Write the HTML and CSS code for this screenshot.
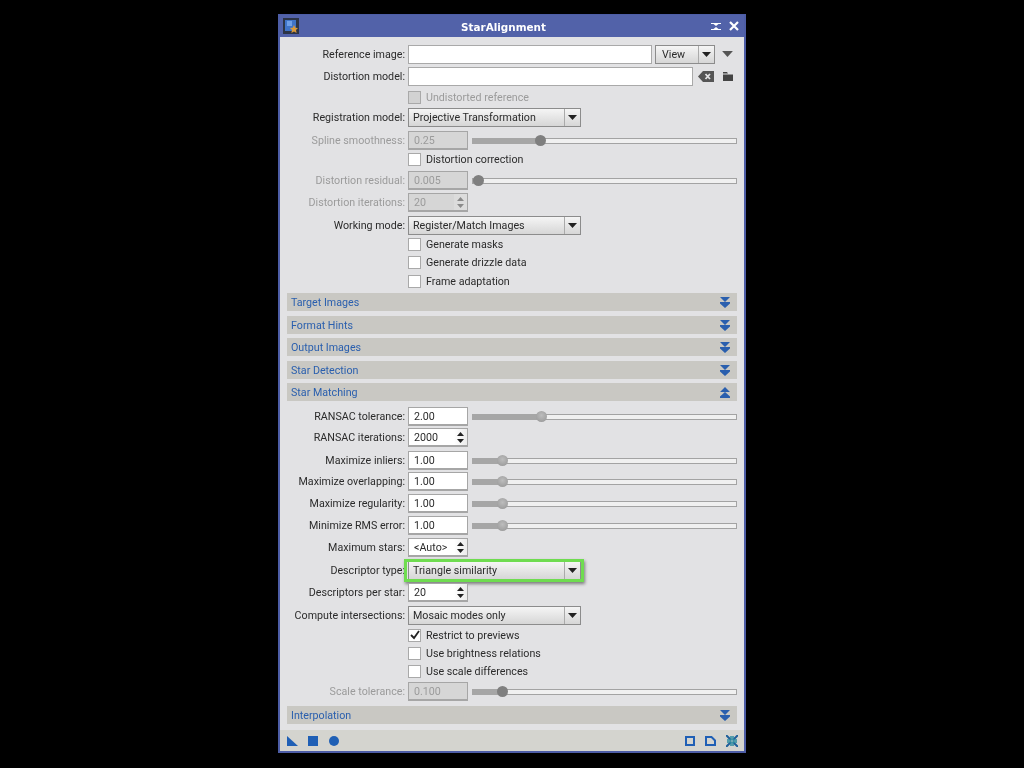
FILE: index.html
```html
<!DOCTYPE html>
<html lang="en">
<head>
    <meta charset="UTF-8">
    <title>StarAlignment</title>
    <link rel="stylesheet" href="styles.css">
</head>
<body>
    <svg class="defs" width="0" height="0">
        <symbol id="down" viewBox="0 0 10 11"><path d="M0 0h10L5 5zM0 5h10v1.500L5 11 0 6.500z"/></symbol>
        <symbol id="up" viewBox="0 0 10 11"><path d="M5 0l5 5H0zM5 5l5 4.500V11H0V9.500z"/></symbol>
        <symbol id="tri" viewBox="0 0 9 5"><path d="M0 0h9L4.500 5z"/></symbol>
    </svg>

    <div class="window">
        <div class="titlebar">
            <svg class="app-icon" width="16" height="16" viewBox="0 0 16 16">
                <rect width="16" height="16" fill="#2c3446"/>
                <rect x="2" y="2" width="11" height="11" fill="#3f74c8"/>
                <rect x="4" y="3" width="5" height="5" fill="#6f9fe6"/>
                <path d="M11 7l1.300 2.800 2.700.3-2 2 .6 2.900-2.600-1.500L8.400 15l.6-2.900-2-2 2.700-.3z" fill="#d99a3c"/>
            </svg>
            <span class="title">StarAlignment</span>
            <svg class="shade" width="10" height="7" viewBox="0 0 10 7"><path d="M0 0h10v1H7.500L5 3 2.500 1H0zM5 4l2.500 2H10v1H0V6h2.500z" fill="#fff"/></svg>
            <svg class="close" width="10" height="10" viewBox="0 0 10 10"><path d="M1 1l8 8M9 1L1 9" stroke="#fff" stroke-width="2.200"/></svg>
        </div>

        <div class="body">
            <div class="row">
                <label>Reference image:</label>
                <div class="field ref"></div>
                <div class="combo view"><span>View</span><i><svg class="arrow"><use href="#tri"/></svg></i></div>
                <svg class="menu-tri" width="11" height="6"><use href="#tri"/></svg>
            </div>
            <div class="row mt3">
                <label>Distortion model:</label>
                <div class="field dist"></div>
                <svg class="clear" width="16" height="11" viewBox="0 0 16 11"><path d="M5 0h11v11H5L0 5.500z" fill="#555"/><path d="M7.500 3l4.500 5M12 3L7.500 8" stroke="#e2e2e4" stroke-width="1.800"/></svg>
                <svg class="folder" width="10" height="9" viewBox="0 0 10 9"><path d="M0 0h4l1 1.500H0zM0 2.500h10V9H0z" fill="#444"/></svg>
            </div>
            <div class="check-row off mt2"><b class="box"></b>Undistorted reference</div>
            <div class="row mt2">
                <label>Registration model:</label>
                <div class="combo"><span>Projective Transformation</span><i><svg class="arrow"><use href="#tri"/></svg></i></div>
            </div>
            <div class="row off mt4">
                <label>Spline smoothness:</label>
                <div class="num">0.25</div>
                <div class="slider"><div class="fill" style="width: 68px"></div><b class="knob"></b><div class="rest"></div></div>
            </div>
            <div class="check-row"><b class="box"></b>Distortion correction</div>
            <div class="row off mt3">
                <label>Distortion residual:</label>
                <div class="num">0.005</div>
                <div class="slider"><div class="fill" style="width: 6px"></div><b class="knob"></b><div class="rest"></div></div>
            </div>
            <div class="row off mt3">
                <label>Distortion iterations:</label>
                <div class="num spin">20<em><svg><use href="#tri"/></svg><svg><use href="#tri"/></svg></em></div>
            </div>
            <div class="row mt4">
                <label>Working mode:</label>
                <div class="combo"><span>Register/Match Images</span><i><svg class="arrow"><use href="#tri"/></svg></i></div>
            </div>
            <div class="check-row"><b class="box"></b>Generate masks</div>
            <div class="check-row"><b class="box"></b>Generate drizzle data</div>
            <div class="check-row mt1"><b class="box"></b>Frame adaptation</div>

            <div class="section mt3">Target Images<svg><use href="#down"/></svg></div>
            <div class="section mt5">Format Hints<svg><use href="#down"/></svg></div>
            <div class="section mt4">Output Images<svg><use href="#down"/></svg></div>
            <div class="section mt5">Star Detection<svg><use href="#down"/></svg></div>
            <div class="section mt4">Star Matching<svg><use href="#up"/></svg></div>

            <div class="row mt6">
                <label>RANSAC tolerance:</label>
                <div class="num">2.00</div>
                <div class="slider"><div class="fill" style="width: 69px"></div><b class="knob"></b><div class="rest"></div></div>
            </div>
            <div class="row mt2">
                <label>RANSAC iterations:</label>
                <div class="num spin">2000<em><svg><use href="#tri"/></svg><svg><use href="#tri"/></svg></em></div>
            </div>
            <div class="row mt4">
                <label>Maximize inliers:</label>
                <div class="num">1.00</div>
                <div class="slider"><div class="fill" style="width: 30px"></div><b class="knob"></b><div class="rest"></div></div>
            </div>
            <div class="row mt2">
                <label>Maximize overlapping:</label>
                <div class="num">1.00</div>
                <div class="slider"><div class="fill" style="width: 30px"></div><b class="knob"></b><div class="rest"></div></div>
            </div>
            <div class="row mt3">
                <label>Maximize regularity:</label>
                <div class="num">1.00</div>
                <div class="slider"><div class="fill" style="width: 30px"></div><b class="knob"></b><div class="rest"></div></div>
            </div>
            <div class="row mt3">
                <label>Minimize RMS error:</label>
                <div class="num">1.00</div>
                <div class="slider"><div class="fill" style="width: 30px"></div><b class="knob"></b><div class="rest"></div></div>
            </div>
            <div class="row mt3">
                <label>Maximum stars:</label>
                <div class="num spin">&lt;Auto&gt;<em><svg><use href="#tri"/></svg><svg><use href="#tri"/></svg></em></div>
            </div>
            <div class="row mt4">
                <label>Descriptor type:</label>
                <div class="combo marked"><span>Triangle similarity</span><i><svg class="arrow"><use href="#tri"/></svg></i></div>
            </div>
            <div class="row mt3">
                <label>Descriptors per star:</label>
                <div class="num spin">20<em><svg><use href="#tri"/></svg><svg><use href="#tri"/></svg></em></div>
            </div>
            <div class="row mt4">
                <label>Compute intersections:</label>
                <div class="combo"><span>Mosaic modes only</span><i><svg class="arrow"><use href="#tri"/></svg></i></div>
            </div>
            <div class="check-row mt1">
                <b class="box"><svg width="10" height="10" viewBox="0 0 10 10"><path d="M1 5l3 3 5-7" fill="none" stroke="#222" stroke-width="1.800"/></svg></b>Restrict to previews
            </div>
            <div class="check-row"><b class="box"></b>Use brightness relations</div>
            <div class="check-row"><b class="box"></b>Use scale differences</div>
            <div class="row off mt2">
                <label>Scale tolerance:</label>
                <div class="num">0.100</div>
                <div class="slider"><div class="fill" style="width: 30px"></div><b class="knob"></b><div class="rest"></div></div>
            </div>
            <div class="section mt5">Interpolation<svg><use href="#down"/></svg></div>
        </div>

        <div class="footer">
            <svg width="11" height="10" viewBox="0 0 11 10"><path d="M0 0l11 10H0z" fill="#1f5fb5"/></svg>
            <svg class="square" width="10" height="10" viewBox="0 0 10 10"><rect width="10" height="10" fill="#1f5fb5"/></svg>
            <svg class="circle" width="10" height="10" viewBox="0 0 10 10"><circle cx="5" cy="5" r="5" fill="#1f5fb5"/></svg>
            <svg class="push" width="10" height="10" viewBox="0 0 10 10"><rect x="1" y="1" width="8" height="8" fill="none" stroke="#1f5fb5" stroke-width="2"/></svg>
            <svg class="doc" width="11" height="10" viewBox="0 0 11 10"><path d="M1 1h5.500L10 4.500V9H1z" fill="none" stroke="#1f5fb5" stroke-width="2"/></svg>
            <svg class="expand" width="12" height="12" viewBox="0 0 12 12"><path d="M0 0l5 5M12 0L7 5M0 12l5-5M12 12L7 7" stroke="#1f5f9a" stroke-width="2"/><path d="M5 1v4H1M7 1v4h4M5 11V7H1M7 11V7h4" fill="none" stroke="#2a8aa0" stroke-width="1.500"/></svg>
        </div>
    </div>
</body>
</html>
```

FILE: styles.css
```css
html, body { margin: 0; height: 100%; background: #000; }
body { font-family: Roboto, Arial, sans-serif; font-size: 10.7px; color: #2b2b2b; }
.defs { position: absolute; }

.window {
    width: 468px; height: 739px; margin: 14px 0 0 278px; box-sizing: border-box;
    display: flex; flex-direction: column;
    background: #e2e2e4; border: 2px solid #4d5da6; border-top-width: 1px;
    filter: blur(.3px);
}

.titlebar { height: 22px; flex: none; display: flex; align-items: center; background: #5262a9; padding: 0 5px 0 3px; }
.app-icon { flex: none; }
.title { flex: 1; text-align: center; color: #fff; font-family: "DejaVu Sans", sans-serif; font-weight: bold; font-size: 10.4px; padding-top: 1px; padding-right: 3px; }
.shade { margin-right: 8px; }

.body { flex: 1; padding: 8px 7px 0; }
.row { display: flex; align-items: center; height: 19px; }
.row label { width: 118px; margin-right: 3px; text-align: right; white-space: nowrap; flex: none; }
.off, .off label { color: #9b9b9b; }

.mt1 { margin-top: 1px; }
.mt2 { margin-top: 2px; }
.mt3 { margin-top: 3px; }
.mt4 { margin-top: 4px; }
.mt5 { margin-top: 5px; }
.mt6 { margin-top: 6px; }

.field { height: 19px; box-sizing: border-box; background: #fff; border: 1px solid #a9a9a9; }
.ref { width: 244px; }
.dist { width: 285px; }
.clear { margin-left: 5px; }
.folder { margin-left: 9px; }
.menu-tri { margin-left: 7px; margin-top: -1px; fill: #555; }

.combo {
    width: 173px; height: 19px; box-sizing: border-box; display: flex; position: relative;
    border: 1px solid #8c8c8c; background: linear-gradient(#f5f5f5, #d6d6d6);
}
.combo span { flex: 1; padding-left: 4px; line-height: 18px; }
.combo i { width: 15px; display: flex; align-items: center; justify-content: center; border-left: 1px solid #aaa; }
.arrow { width: 9px; height: 5px; fill: #222; }
.view { width: 60px; margin-left: 3px; }
.view span { padding-left: 6px; }

/* green frame drawn over the descriptor combo */
.marked::after {
    content: ""; position: absolute; top: -3px; bottom: -3px; left: -5px; right: -4px;
    border: 3px solid #6fdc50; box-shadow: 1px 2px 3px rgba(0, 0, 0, .45);
}

.num {
    width: 60px; height: 19px; box-sizing: border-box; position: relative; flex: none;
    padding-left: 5px; line-height: 17px; background: #fff; border: 1px solid #a6a6a6; border-width: 1px 1px 2px;
}
.off .num { background: #d6d6d6; }
.spin em { position: absolute; right: 0; top: 0; bottom: 0; width: 13px; display: flex; flex-direction: column; align-items: center; justify-content: center; gap: 3px; background: linear-gradient(90deg, #fff, #ececec); }
.spin em svg { width: 7px; height: 4px; fill: #222; }
.spin em svg:first-child { transform: scaleY(-1); }
.off .spin em { background: #dcdcdc; }
.off .spin em svg { fill: #8a8a8a; }

.slider { flex: 1; margin-left: 4px; height: 6px; display: flex; align-items: center; }
.fill { height: 6px; background: #a6a6a6; flex: none; }
.rest { flex: 1; height: 6px; box-sizing: border-box; background: #f0f0f0; border: 1px solid #a3a3a3; }
.knob { width: 11px; height: 11px; margin: 0 -5px; border-radius: 50%; background: radial-gradient(circle at 50% 40%, #bdbdbd, #949494); position: relative; flex: none; }
.off .knob { background: #7f7f7f; }

.check-row { display: flex; align-items: center; height: 18px; padding-left: 121px; }
.box { width: 11px; height: 11px; margin-right: 5px; background: #fff; border: 1px solid #a9a9a9; font-weight: normal; display: flex; align-items: center; justify-content: center; }
.off .box { background: #d2d2d2; }

.section { height: 18px; box-sizing: border-box; padding: 1px 0 0 4px; display: flex; justify-content: space-between; align-items: center; background: #c9c8c3; color: #2a5fae; }
.section svg { width: 10px; height: 11px; margin: -1px 7px 0 0; fill: #2a5fae; }

.footer { height: 21px; flex: none; display: flex; align-items: center; padding: 0 6px 0 7px; background: #d4d4cf; }
.square { margin-left: 10px; }
.circle { margin-left: 11px; }
.push { margin-left: auto; }
.doc { margin-left: 10px; }
.expand { margin-left: 10px; }
```
